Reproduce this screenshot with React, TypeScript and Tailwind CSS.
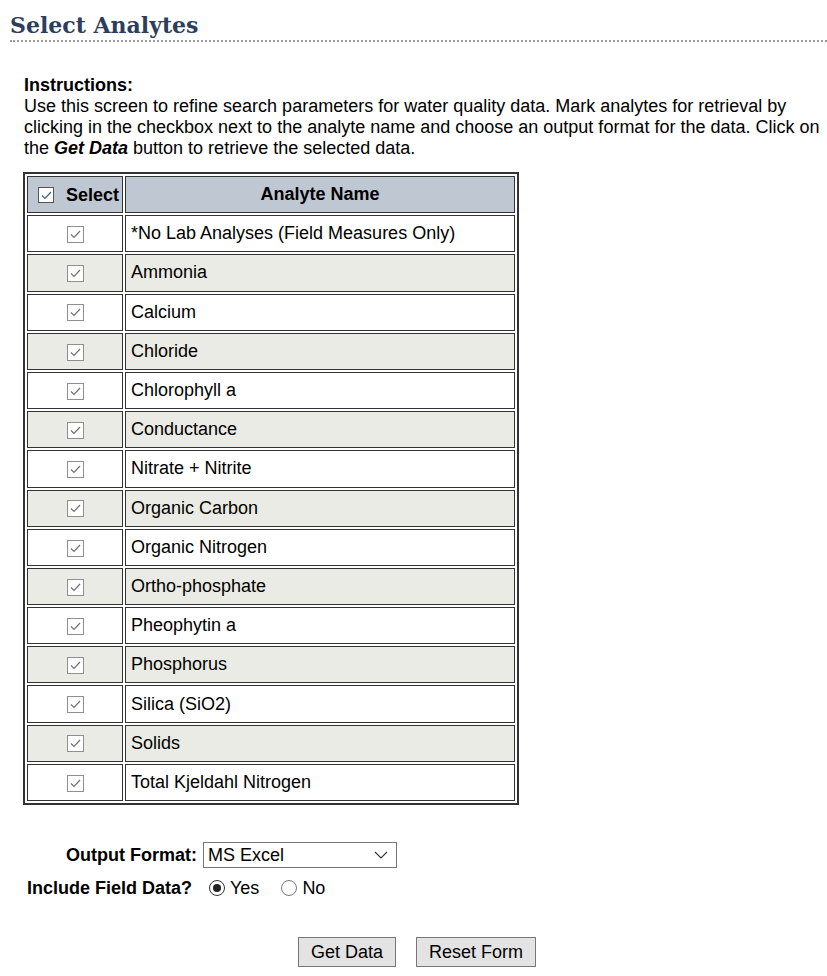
const analytes = [
  '*No Lab Analyses (Field Measures Only)',
  'Ammonia',
  'Calcium',
  'Chloride',
  'Chlorophyll a',
  'Conductance',
  'Nitrate + Nitrite',
  'Organic Carbon',
  'Organic Nitrogen',
  'Ortho-phosphate',
  'Pheophytin a',
  'Phosphorus',
  'Silica (SiO2)',
  'Solids',
  'Total Kjeldahl Nitrogen',
];

function Check({ header = false }: { header?: boolean }) {
  // checked checkbox: header one is live, row ones look disabled
  return (
    <span
      className={
        header
          ? 'inline-flex w-[16px] h-[16px] items-center justify-center border border-[#555] bg-white align-middle'
          : 'inline-flex w-[17px] h-[17px] items-center justify-center border border-[#8f8f8f] bg-white align-middle'
      }
    >
      <svg width="11" height="9" viewBox="0 0 11 9" fill="none">
        <path
          d="M1 4.5 L4 7.5 L10 1"
          stroke={header ? '#3f5f86' : '#707070'}
          strokeWidth="1.2"
        />
      </svg>
    </span>
  );
}

function Radio({ checked }: { checked?: boolean }) {
  return (
    <span
      className={
        'inline-flex w-[16px] h-[16px] rounded-full items-center justify-center bg-white border ' +
        (checked ? 'border-[#333]' : 'border-[#777]')
      }
    >
      {checked && <span className="w-[8px] h-[8px] rounded-full bg-[#222]" />}
    </span>
  );
}

export default function App() {
  return (
    <div className="bg-white min-h-screen font-['Liberation_Sans',Arial,sans-serif] text-[18px] leading-[21px] text-black">
      <h1 className="ml-[10px] pt-[14px] pb-[4px] border-b-2 border-dotted border-[#9a9a9a] font-['DejaVu_Serif',Georgia,serif] font-bold text-[22px] leading-[22px] text-[#2c3d5e]">
        Select Analytes
      </h1>

      <div className="pl-[24px] pt-[33px]">
        <p className="whitespace-nowrap">
          <b>Instructions:</b>
          <br />
          Use this screen to refine search parameters for water quality data. Mark analytes for retrieval by
          <br />
          clicking in the checkbox next to the analyte name and choose an output format for the data. Click on
          <br />
          the <b><i>Get Data</i></b> button to retrieve the selected data.
        </p>

        <table className="mt-[13px] -ml-[1px] border-separate border-spacing-[2px] border-2 border-[#333]">
          <thead>
            <tr>
              <th className="w-[96px] h-[37.2px] p-0 border border-[#333] bg-[#bfc7d2] text-left font-bold">
                <span className="pl-[10px] inline-flex items-center gap-[12px]">
                  <Check header />
                  Select
                </span>
              </th>
              <th className="w-[390px] h-[37.2px] p-0 border border-[#333] bg-[#bfc7d2] font-bold text-center">
                Analyte Name
              </th>
            </tr>
          </thead>
          <tbody>
            {analytes.map((a, i) => {
              const bg = i % 2 === 1 ? 'bg-[#ebebe5]' : 'bg-white';
              return (
                <tr key={a}>
                  <td className={'h-[37.2px] p-0 border border-[#333] text-center ' + bg}>
                    <Check />
                  </td>
                  <td className={'h-[37.2px] p-0 pl-[5px] border border-[#333] ' + bg}>{a}</td>
                </tr>
              );
            })}
          </tbody>
        </table>

        <div className="mt-[37px] flex items-center h-[26px]">
          <span className="w-[173px] text-right font-bold">Output Format:</span>
          <span className="ml-[6px] w-[194px] h-[26px] border border-[#767676] bg-white flex items-center justify-between pl-[4px] pr-[8px]">
            MS Excel
            <svg width="14" height="8" viewBox="0 0 14 8" fill="none">
              <path d="M1 1 L7 7 L13 1" stroke="#333" strokeWidth="1.1" />
            </svg>
          </span>
        </div>

        <div className="mt-[7px] flex items-center h-[26px]">
          <span className="w-[168px] text-right font-bold">Include Field Data?</span>
          <span className="ml-[17px] flex items-center">
            <Radio checked />
            <span className="ml-[5px]">Yes</span>
            <span className="ml-[22px] flex items-center">
              <Radio />
            </span>
            <span className="ml-[5px]">No</span>
          </span>
        </div>
      </div>

      <div className="mt-[36px] pl-[7px] flex justify-center gap-[20px]">
        <button className="h-[30px] px-[12px] border border-[#767676] bg-[#e3e3e3] text-[18px] leading-[21px]">
          Get Data
        </button>
        <button className="h-[30px] px-[12px] border border-[#767676] bg-[#e3e3e3] text-[18px] leading-[21px]">
          Reset Form
        </button>
      </div>
    </div>
  );
}
